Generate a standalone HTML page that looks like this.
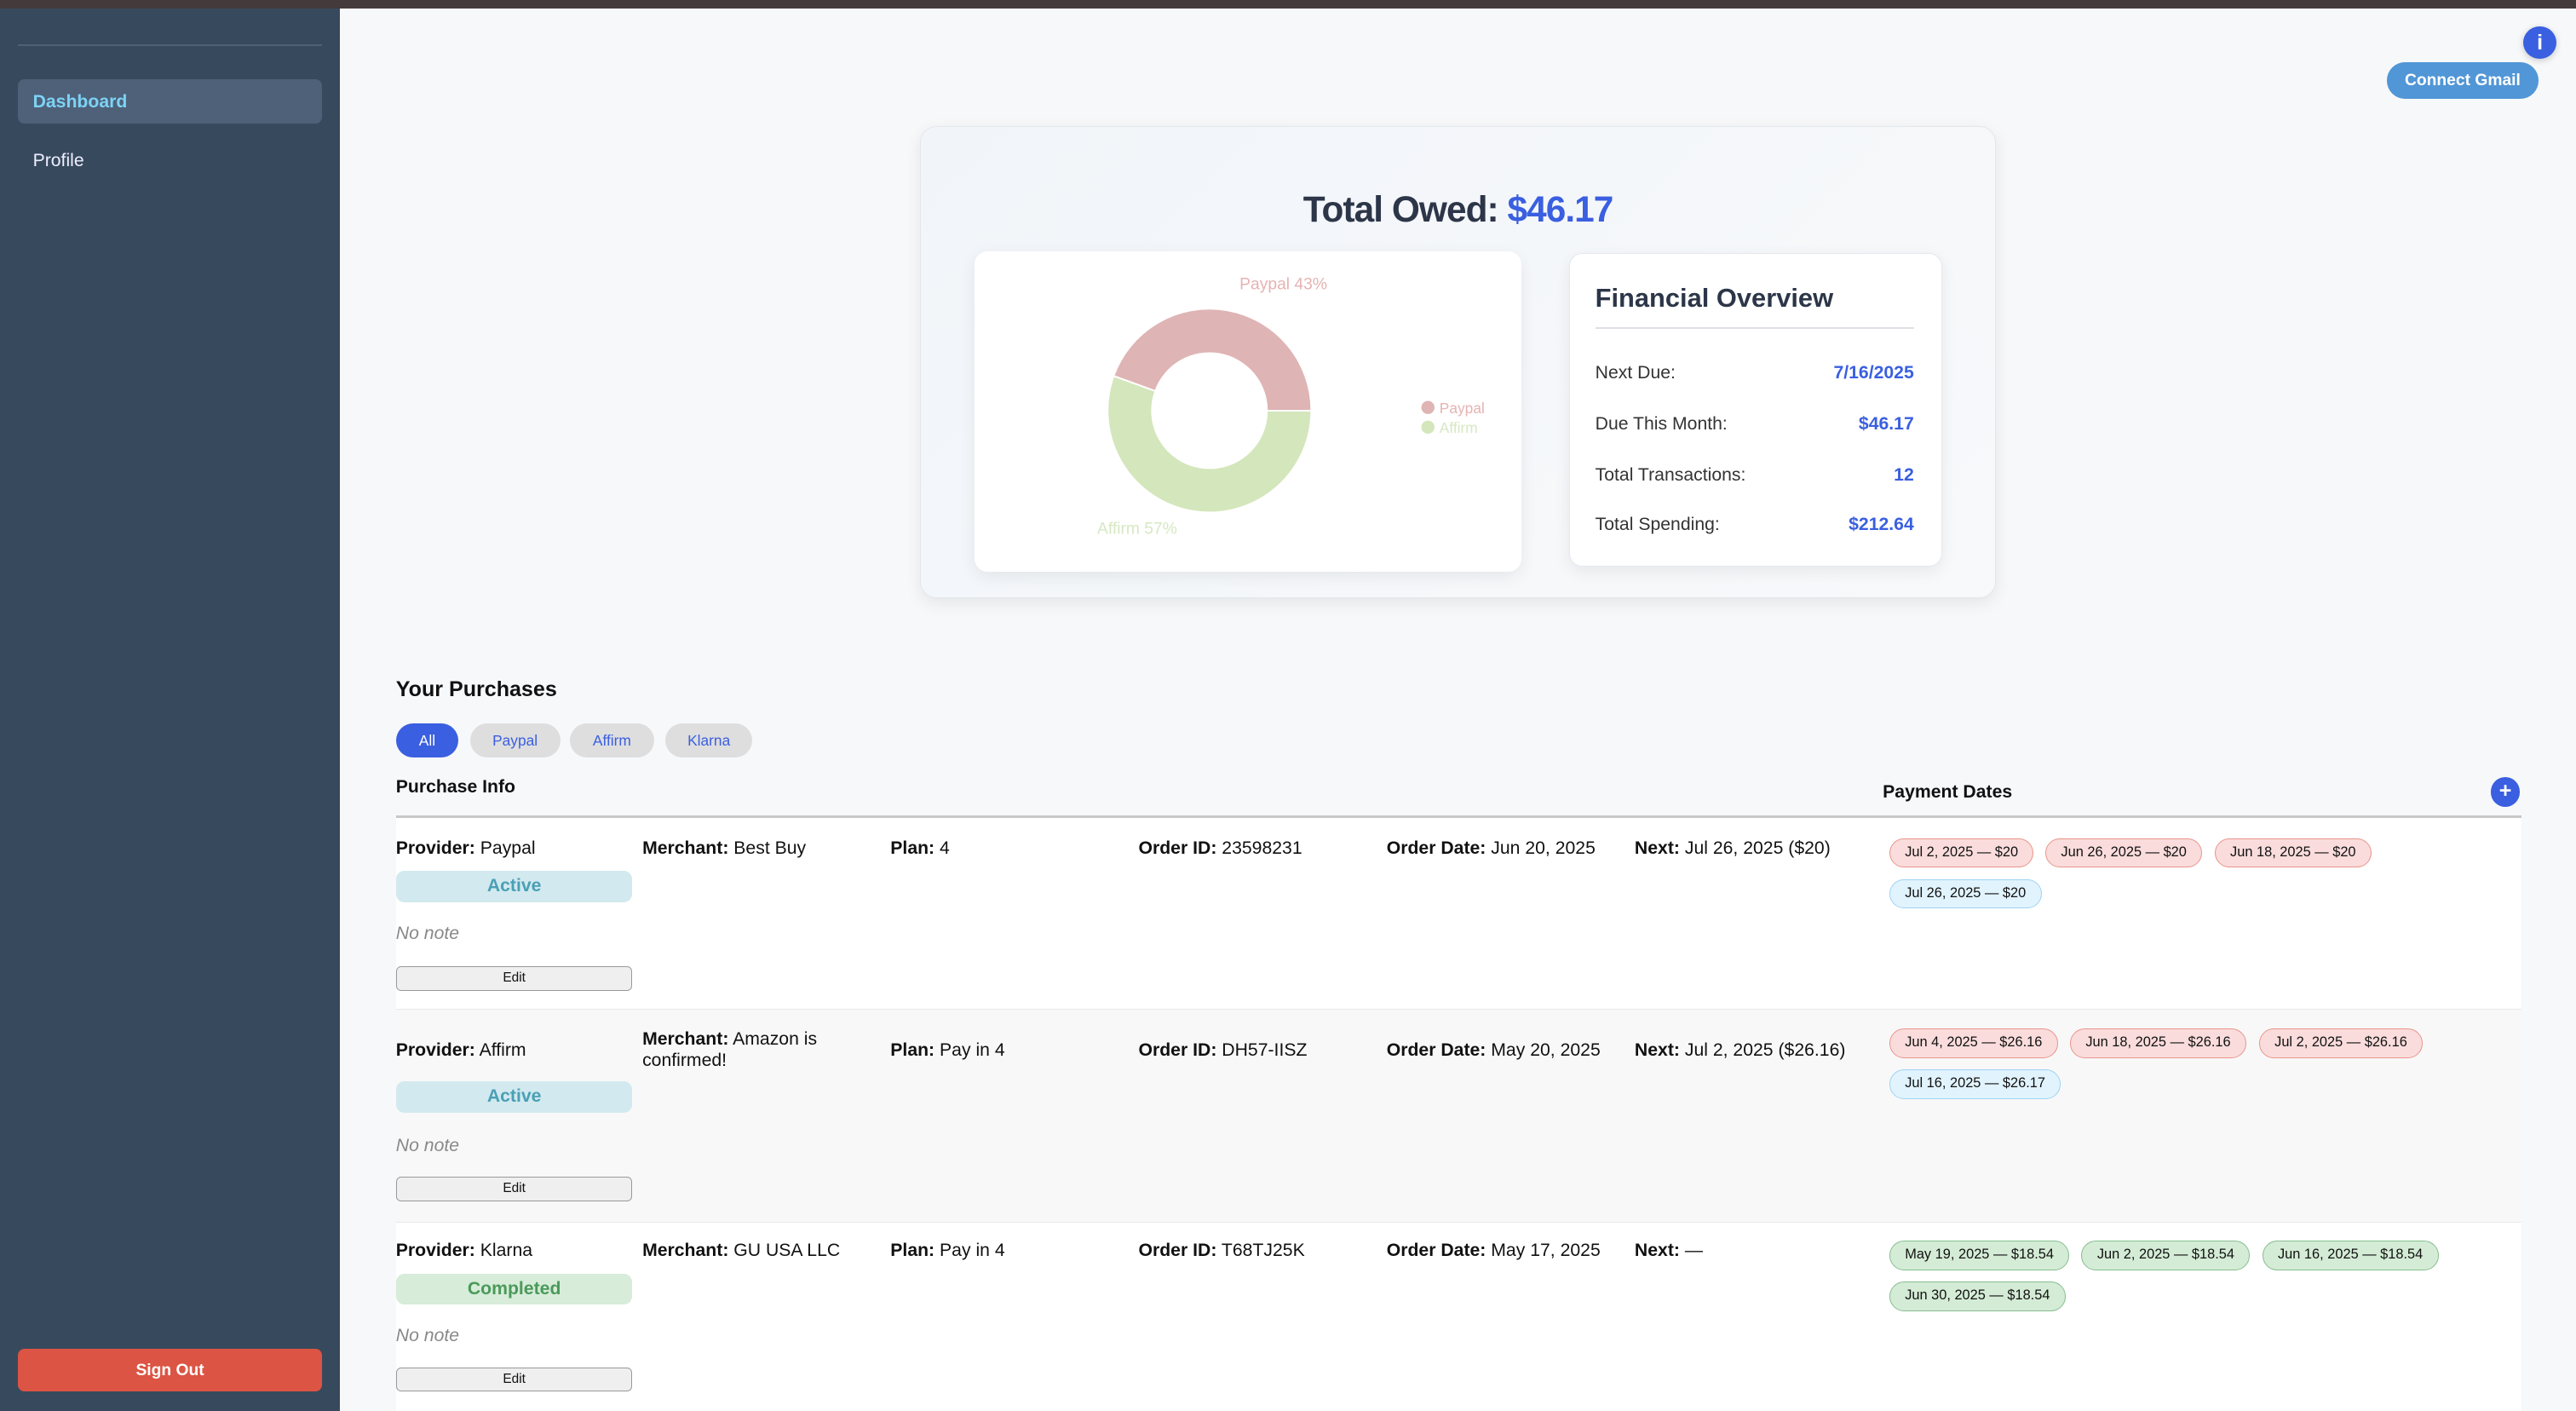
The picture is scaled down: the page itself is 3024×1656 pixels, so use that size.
<!DOCTYPE html>
<html><head><meta charset="utf-8"><style>
*{box-sizing:border-box;margin:0;padding:0}
html,body{width:3024px;height:1656px;overflow:hidden;background:#f7f8fa}
#r{zoom:1.92857;width:1568px;height:859px;position:relative;font-family:"Liberation Sans",Arial,sans-serif;color:#111}
.a{position:absolute;white-space:nowrap}
.top{left:0;top:0;width:1568px;height:5px;background:#453a3b}
.side{left:0;top:5px;width:207px;height:854px;background:#374a5d}
.card{left:560px;top:77px;width:655px;height:287px;border-radius:10px;background:linear-gradient(135deg,#f1f5f9,#f8f9fb);border:1px solid #e3e7ec;box-shadow:0 3px 10px rgba(0,0,0,.08)}
.wc{background:#fff;border-radius:8px;box-shadow:0 3px 10px rgba(0,0,0,.07)}
.fl{font-size:11px;color:#333}
.fv{font-size:11px;color:#3a5fe0;font-weight:bold;text-align:right;width:120px}
.pill{height:21px;border-radius:11px;background:#dedede;color:#3a5fe0;font-size:9px;line-height:21px;text-align:center}
.t{font-size:11px;color:#111}
.t b{font-weight:bold}
.badge{width:144px;height:19px;border-radius:5px;font-size:11px;font-weight:bold;text-align:center;line-height:19px}
.note{font-size:11px;font-style:italic;color:#888}
.edit{width:144px;height:15px;border:1px solid #999;border-radius:3px;background:#efefef;font-size:8px;text-align:center;line-height:13px}
.chip{height:18px;border-radius:9px;font-size:8.5px;line-height:16px;padding:0 9px;border:1px solid}
.pk{background:#fadcdc;border-color:#e9958a}
.bl{background:#e1f3fd;border-color:#9fd3f4}
.gr{background:#d4ecd6;border-color:#86bd8f}
</style></head><body><div id="r">
<div class="a top"></div>
<div class="a side"></div>
<div class="a" style="left:11px;top:27px;width:185px;height:1px;background:#4f6275"></div>
<div class="a" style="left:11px;top:48px;width:185px;height:27px;border-radius:4px;background:#4e6179"></div>
<div class="a" style="left:20px;top:56px;font-size:11px;font-weight:bold;color:#7dd3f5">Dashboard</div>
<div class="a" style="left:20px;top:92px;font-size:11px;color:#eef">Profile</div>
<div class="a" style="left:11px;top:821px;width:185px;height:26px;border-radius:4px;background:#dc5443;color:#fff;font-size:10px;font-weight:bold;text-align:center;line-height:27px">Sign Out</div>

<div class="a" style="left:1536px;top:16px;width:20px;height:20px;border-radius:50%;background:#3a5fe0;color:#fff;font-size:13px;font-weight:bold;text-align:center;line-height:20px;box-shadow:0 1px 4px rgba(0,0,0,.2)">i</div>
<div class="a" style="left:1453px;top:38px;width:92px;height:22px;border-radius:11px;background:#5196d6;color:#fff;font-size:10px;font-weight:bold;text-align:center;line-height:23px">Connect Gmail</div>

<div class="a card"></div>
<div class="a" style="left:560px;width:655px;top:115px;text-align:center;font-size:22px;font-weight:bold;color:#2c3648;letter-spacing:-0.5px">Total Owed: <span style="color:#3a5fe0">$46.17</span></div>
<div class="a wc" style="left:593px;top:153px;width:333px;height:195px"></div>
<svg class="a" style="left:593px;top:153px" width="333" height="195">
<path d="M205 97 A62 62 0 1 1 84.7 75.8 L110.1 85 A35 35 0 1 0 178 97 Z" fill="#d4e6bb" stroke="#fff" stroke-width="1"/>
<path d="M205 97 A62 62 0 0 0 84.7 75.8 L110.1 85 A35 35 0 0 1 178 97 Z" fill="#dfb4b4" stroke="#fff" stroke-width="1"/>
<text x="188" y="23" font-size="10" fill="#e6b3b3" text-anchor="middle" font-family="Liberation Sans">Paypal 43%</text>
<text x="99" y="172" font-size="10" fill="#d6e8c3" text-anchor="middle" font-family="Liberation Sans">Affirm 57%</text>
<circle cx="276" cy="95" r="4" fill="#dfb4b4"/><text x="283" y="98.5" font-size="9" fill="#e6b3b3" font-family="Liberation Sans">Paypal</text>
<circle cx="276" cy="107" r="4" fill="#d4e6bb"/><text x="283" y="110.5" font-size="9" fill="#d6e8c3" font-family="Liberation Sans">Affirm</text>
</svg>
<div class="a wc" style="left:955px;top:154px;width:227px;height:191px;border:1px solid #e4e8ee"></div>
<div class="a" style="left:971px;top:172px;font-size:16px;font-weight:bold;color:#2c3648">Financial Overview</div>
<div class="a" style="left:971px;top:199px;width:194px;height:1px;background:#dde1e6"></div>
<div class="a fl" style="left:971px;top:221px">Next Due:</div><div class="a fv" style="left:1045px;top:221px">7/16/2025</div>
<div class="a fl" style="left:971px;top:252px">Due This Month:</div><div class="a fv" style="left:1045px;top:252px">$46.17</div>
<div class="a fl" style="left:971px;top:283px">Total Transactions:</div><div class="a fv" style="left:1045px;top:283px">12</div>
<div class="a fl" style="left:971px;top:313px">Total Spending:</div><div class="a fv" style="left:1045px;top:313px">$212.64</div>

<div class="a" style="left:241px;top:412px;font-size:13px;font-weight:bold">Your Purchases</div>
<div class="a pill" style="left:241px;top:440px;width:38px;background:#3a5fe0;color:#fff">All</div>
<div class="a pill" style="left:286px;top:440px;width:55px">Paypal</div>
<div class="a pill" style="left:347px;top:440px;width:51px">Affirm</div>
<div class="a pill" style="left:405px;top:440px;width:53px">Klarna</div>
<div class="a" style="left:241px;top:473px;font-size:11px;font-weight:bold">Purchase Info</div>
<div class="a" style="left:1146px;top:476px;font-size:11px;font-weight:bold">Payment Dates</div>
<div class="a" style="left:1516px;top:473px;width:18px;height:18px;border-radius:50%;background:#3a5fe0;color:#fff;font-size:13px;font-weight:bold;text-align:center;line-height:17px">+</div>

<div class="a" style="left:241px;top:498px;width:1294px;height:116px;background:#fff"></div>
<div class="a" style="left:241px;top:614px;width:1294px;height:130px;background:#f8f8f9;border-top:1px solid #e8e8e8;border-bottom:1px solid #e8e8e8"></div>
<div class="a" style="left:241px;top:744px;width:1294px;height:115px;background:#fff"></div>
<div class="a" style="left:241px;top:496px;width:1294px;height:2px;background:#c8c8c8"></div>

<div class="a t" style="left:241px;top:510px"><b>Provider:</b> Paypal</div>
<div class="a t" style="left:391px;top:510px"><b>Merchant:</b> Best Buy</div>
<div class="a t" style="left:542px;top:510px"><b>Plan:</b> 4</div>
<div class="a t" style="left:693px;top:510px"><b>Order ID:</b> 23598231</div>
<div class="a t" style="left:844px;top:510px"><b>Order Date:</b> Jun 20, 2025</div>
<div class="a t" style="left:995px;top:510px"><b>Next:</b> Jul 26, 2025 ($20)</div>
<div class="a badge" style="left:241px;top:530px;background:#d2e9ef;color:#4aa0b5">Active</div>
<div class="a note" style="left:241px;top:562px">No note</div>
<div class="a edit" style="left:241px;top:588px">Edit</div>
<div class="a chip pk" style="left:1150px;top:510px">Jul 2, 2025 — $20</div>
<div class="a chip pk" style="left:1245px;top:510px">Jun 26, 2025 — $20</div>
<div class="a chip pk" style="left:1348px;top:510px">Jun 18, 2025 — $20</div>
<div class="a chip bl" style="left:1150px;top:535px">Jul 26, 2025 — $20</div>

<div class="a t" style="left:241px;top:633px"><b>Provider:</b> Affirm</div>
<div class="a t" style="left:391px;top:626px;line-height:13px"><b>Merchant:</b> Amazon is<br>confirmed!</div>
<div class="a t" style="left:542px;top:633px"><b>Plan:</b> Pay in 4</div>
<div class="a t" style="left:693px;top:633px"><b>Order ID:</b> DH57-IISZ</div>
<div class="a t" style="left:844px;top:633px"><b>Order Date:</b> May 20, 2025</div>
<div class="a t" style="left:995px;top:633px"><b>Next:</b> Jul 2, 2025 ($26.16)</div>
<div class="a badge" style="left:241px;top:658px;background:#d2e9ef;color:#4aa0b5">Active</div>
<div class="a note" style="left:241px;top:691px">No note</div>
<div class="a edit" style="left:241px;top:716px">Edit</div>
<div class="a chip pk" style="left:1150px;top:626px">Jun 4, 2025 — $26.16</div>
<div class="a chip pk" style="left:1260px;top:626px">Jun 18, 2025 — $26.16</div>
<div class="a chip pk" style="left:1375px;top:626px">Jul 2, 2025 — $26.16</div>
<div class="a chip bl" style="left:1150px;top:651px">Jul 16, 2025 — $26.17</div>

<div class="a t" style="left:241px;top:755px"><b>Provider:</b> Klarna</div>
<div class="a t" style="left:391px;top:755px"><b>Merchant:</b> GU USA LLC</div>
<div class="a t" style="left:542px;top:755px"><b>Plan:</b> Pay in 4</div>
<div class="a t" style="left:693px;top:755px"><b>Order ID:</b> T68TJ25K</div>
<div class="a t" style="left:844px;top:755px"><b>Order Date:</b> May 17, 2025</div>
<div class="a t" style="left:995px;top:755px"><b>Next:</b> —</div>
<div class="a badge" style="left:241px;top:775px;background:#d7ecd9;color:#4a9a5a">Completed</div>
<div class="a note" style="left:241px;top:807px">No note</div>
<div class="a edit" style="left:241px;top:832px">Edit</div>
<div class="a chip gr" style="left:1150px;top:755px">May 19, 2025 — $18.54</div>
<div class="a chip gr" style="left:1267px;top:755px">Jun 2, 2025 — $18.54</div>
<div class="a chip gr" style="left:1377px;top:755px">Jun 16, 2025 — $18.54</div>
<div class="a chip gr" style="left:1150px;top:780px">Jun 30, 2025 — $18.54</div>
</div></body></html>
